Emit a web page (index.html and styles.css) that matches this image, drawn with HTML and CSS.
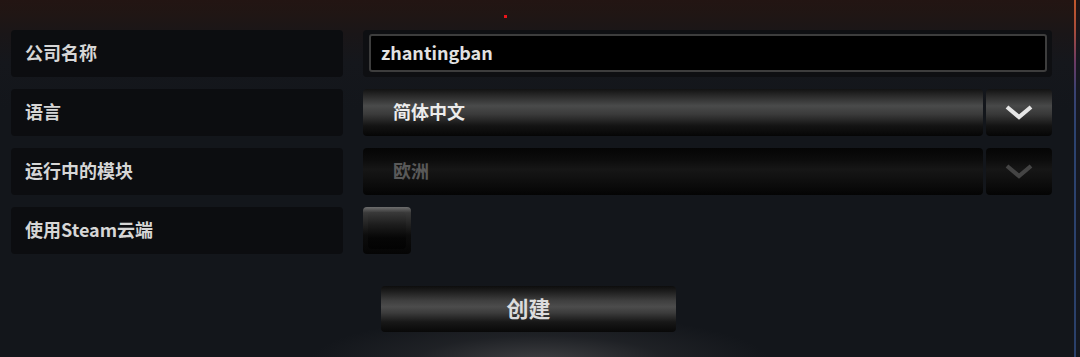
FILE: index.html
```html
<!DOCTYPE html>
<html lang="zh-CN">
<head>
<meta charset="utf-8">
<title>创建公司</title>
<link rel="stylesheet" href="styles.css">
</head>
<body>
<div class="screen">
  <main class="panel">
    <span class="rec-dot"></span>
    <div class="form">
      <div class="label">公司名称</div>
      <div class="field-wrap">
        <div class="text-input">zhantingban</div>
      </div>

      <div class="label">语言</div>
      <div class="select">
        <div class="select-value">简体中文</div>
        <div class="select-arrow">
          <svg viewBox="0 0 30 16" width="30" height="16"><path d="M3 3 L15 13 L27 3" fill="none" stroke="#e6e6e6" stroke-width="4.2" stroke-linejoin="miter"/></svg>
        </div>
      </div>

      <div class="label">运行中的模块</div>
      <div class="select disabled">
        <div class="select-value">欧洲</div>
        <div class="select-arrow">
          <svg viewBox="0 0 30 16" width="30" height="16"><path d="M3 3 L15 13 L27 3" fill="none" stroke="#444" stroke-width="4.2" stroke-linejoin="miter"/></svg>
        </div>
      </div>

      <div class="label">使用Steam云端</div>
      <div class="check-cell">
        <div class="checkbox"></div>
      </div>
    </div>
    <div class="actions">
      <button class="btn">创建</button>
    </div>
  </main>
  <div class="edge"></div>
  <div class="outside"></div>
</div>
</body>
</html>
```
FILE: styles.css
```css
html, body {
  margin: 0;
  padding: 0;
  height: 100%;
}
body {
  background: #13161b;
  font-family: "Noto Sans CJK SC", "Noto Sans", sans-serif;
  font-weight: 700;
  color: #d9d9d9;
  overflow: hidden;
}
.screen {
  display: flex;
  height: 357px;
  width: 1080px;
}
.panel {
  position: relative;
  width: 1074px;
  height: 357px;
  box-sizing: border-box;
  padding: 30px 0 0 11px;
  background:
    radial-gradient(ellipse 230px 48px at 540px 362px, rgba(78,78,80,0.75), rgba(52,53,56,0.35) 55%, rgba(20,23,28,0) 100%),
    linear-gradient(to bottom, #231513 0px, #201614 14px, #1a1618 34px, #15171c 62px, #13161b 110px, #13161b 100%);
}
.rec-dot {
  position: absolute;
  left: 504px;
  top: 15px;
  width: 3px;
  height: 3px;
  background: #e8141a;
}
.form {
  display: grid;
  grid-template-columns: 332px 689px;
  grid-auto-rows: 47px;
  column-gap: 20px;
  row-gap: 12px;
}
.label {
  background: #0c0d10;
  border-radius: 4px;
  display: flex;
  align-items: center;
  padding: 0 0 3px 14px;
  font-size: 18px;
  color: #d6d6d6;
}
.field-wrap {
  background: #0e0f12;
  border-radius: 4px;
  padding: 4px 5px 5px 6px;
  display: flex;
}
.text-input {
  flex: 1;
  background: #000;
  border: 2px solid #3d3d3d;
  border-radius: 3px;
  display: flex;
  align-items: center;
  padding: 0 0 3px 10px;
  font-size: 18px;
  color: #e2e2e2;
}
.select {
  display: flex;
  gap: 3px;
}
.select-value {
  width: 620px;
  border-radius: 4px;
  display: flex;
  align-items: center;
  padding: 0 0 3px 30px;
  box-sizing: border-box;
  font-size: 18px;
  color: #ececec;
  background: linear-gradient(to bottom, #121212 0%, #2c2c2c 16%, #4a4b4b 36%, #3a3a3a 54%, #141414 78%, #050505 100%);
}
.select-arrow {
  width: 66px;
  border-radius: 4px;
  display: flex;
  align-items: center;
  justify-content: center;
  padding-bottom: 2px;
  box-sizing: border-box;
  background: linear-gradient(to bottom, #121212 0%, #2c2c2c 16%, #484949 36%, #383838 54%, #141414 78%, #050505 100%);
}
.select.disabled .select-value {
  color: #595959;
  background: linear-gradient(to bottom, #050505 0%, #0c0c0c 25%, #161616 45%, #101010 65%, #040404 100%);
}
.select.disabled .select-arrow {
  background: linear-gradient(to bottom, #050505 0%, #0c0c0c 25%, #161616 45%, #101010 65%, #040404 100%);
}
.check-cell {
  display: flex;
}
.checkbox {
  width: 48px;
  height: 47px;
  box-sizing: border-box;
  border-radius: 4px;
  background: linear-gradient(to bottom, #6e6e6e 0%, #3a3a3a 12%, #0c0c0c 60%, #050505 100%);
  padding: 5px;
  display: flex;
}
.checkbox::before {
  content: "";
  flex: 1;
  border-radius: 4px;
  background: linear-gradient(to bottom, #3a3a3a 0%, #1c1c1c 35%, #060606 70%, #030303 100%);
}
.actions {
  display: flex;
  padding-left: 370px;
  margin-top: 32px;
}
.btn {
  width: 295px;
  height: 46px;
  border: 0;
  border-radius: 4px;
  font-family: "Noto Sans CJK SC", "Noto Sans", sans-serif;
  font-weight: 700;
  font-size: 22px;
  color: #dcdcdc;
  padding: 0 0 5px 0;
  background: linear-gradient(to bottom, #0d0d0d 0%, #1e1e1e 12%, #3f3f3f 32%, #4c4c4c 45%, #3c3c3c 58%, #181818 78%, #080808 100%);
}
.edge {
  width: 2px;
  height: 357px;
  background: linear-gradient(to bottom, #c2582c 0px, #a84c3a 30px, #6c3a64 62px, #3a4272 90px, #2c4370 130px, #2a406a 100%);
}
.outside {
  flex: 1;
  background: linear-gradient(to bottom, #1e1414 0px, #171820 60px, #141820 100%);
}
```
